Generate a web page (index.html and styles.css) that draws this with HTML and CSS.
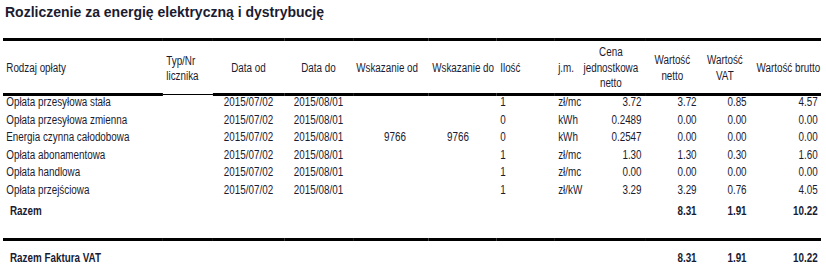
FILE: index.html
```html
<!DOCTYPE html>
<html lang="pl">
<head>
    <meta charset="UTF-8">
    <title>Rozliczenie</title>
    <link rel="stylesheet" href="styles.css">
</head>
<body>
    <h1 class="title">Rozliczenie za energię elektryczną i dystrybucję</h1>
    <div class="sheet">
        <table class="bill">
            <colgroup>
                <col class="col-name">
                <col class="col-meter">
                <col class="col-date">
                <col class="col-date2">
                <col class="col-reading">
                <col class="col-reading2">
                <col class="col-qty">
                <col class="col-unit">
                <col class="col-price">
                <col class="col-net">
                <col class="col-vat">
                <col class="col-gross">
            </colgroup>
            <thead>
                <tr>
                    <th class="l">Rodzaj opłaty</th>
                    <th class="l typ">Typ/Nr<br>licznika</th>
                    <th>Data od</th>
                    <th>Data do</th>
                    <th class="l">Wskazanie od</th>
                    <th class="l">Wskazanie do</th>
                    <th class="l">Ilość</th>
                    <th class="l">j.m.</th>
                    <th class="tight">Cena<br>jednostkowa<br>netto</th>
                    <th>Wartość<br>netto</th>
                    <th>Wartość<br>VAT</th>
                    <th class="r">Wartość brutto</th>
                </tr>
            </thead>
            <tbody>
                <tr>
                    <td>Opłata przesyłowa stała</td><td></td>
                    <td class="c">2015/07/02</td><td class="c">2015/08/01</td>
                    <td></td><td></td><td>1</td><td>zł/mc</td>
                    <td class="r">3.72</td><td class="r">3.72</td><td class="r">0.85</td><td class="r">4.57</td>
                </tr>
                <tr>
                    <td>Opłata przesyłowa zmienna</td><td></td>
                    <td class="c">2015/07/02</td><td class="c">2015/08/01</td>
                    <td></td><td></td><td>0</td><td>kWh</td>
                    <td class="r">0.2489</td><td class="r">0.00</td><td class="r">0.00</td><td class="r">0.00</td>
                </tr>
                <tr>
                    <td>Energia czynna całodobowa</td><td></td>
                    <td class="c">2015/07/02</td><td class="c">2015/08/01</td>
                    <td class="c from">9766</td><td class="c to">9766</td><td>0</td><td>kWh</td>
                    <td class="r">0.2547</td><td class="r">0.00</td><td class="r">0.00</td><td class="r">0.00</td>
                </tr>
                <tr>
                    <td>Opłata abonamentowa</td><td></td>
                    <td class="c">2015/07/02</td><td class="c">2015/08/01</td>
                    <td></td><td></td><td>1</td><td>zł/mc</td>
                    <td class="r">1.30</td><td class="r">1.30</td><td class="r">0.30</td><td class="r">1.60</td>
                </tr>
                <tr>
                    <td>Opłata handlowa</td><td></td>
                    <td class="c">2015/07/02</td><td class="c">2015/08/01</td>
                    <td></td><td></td><td>1</td><td>zł/mc</td>
                    <td class="r">0.00</td><td class="r">0.00</td><td class="r">0.00</td><td class="r">0.00</td>
                </tr>
                <tr>
                    <td>Opłata przejściowa</td><td></td>
                    <td class="c">2015/07/02</td><td class="c">2015/08/01</td>
                    <td></td><td></td><td>1</td><td>zł/kW</td>
                    <td class="r">3.29</td><td class="r">3.29</td><td class="r">0.76</td><td class="r">4.05</td>
                </tr>
                <tr class="sum">
                    <td colspan="9" class="sum-label">Razem</td>
                    <td class="r">8.31</td><td class="r">1.91</td><td class="r">10.22</td>
                </tr>
                <tr class="sum total">
                    <td colspan="9" class="sum-label">Razem Faktura VAT</td>
                    <td class="r">8.31</td><td class="r">1.91</td><td class="r">10.22</td>
                </tr>
            </tbody>
        </table>
    </div>
</body>
</html>
```

FILE: styles.css
```css
html, body {
    overflow: hidden;
}

body {
    margin: 0;
    padding: 4px 3px 0 3px;
    background-color: #fff;
    color: #1b1b30;
    font-family: "Liberation Sans", Arial, sans-serif;
}

.title {
    margin: 0 0 0 2px;
    font-size: 14px;
    line-height: 16px;
    font-weight: bold;
}

.sheet {
    width: 818px;
    margin-top: 18px;
    overflow: hidden;
}

/* the original uses Arial Narrow; no narrow face here, so squeeze the table */
.bill {
    width: 997.5px;
    table-layout: fixed;
    border-collapse: collapse;
    border-top: 3px solid #000;
    font-size: 12px;
    transform: scaleX(0.82);
    transform-origin: 0 0;
}

.col-name    { width: 195.1px; }
.col-meter   { width: 61px; }
.col-date    { width: 86.6px; }
.col-date2   { width: 84.1px; }
.col-reading { width: 92.7px; }
.col-reading2{ width: 82.9px; }
.col-qty     { width: 70.7px; }
.col-unit    { width: 26.8px; }
.col-price   { width: 82.9px; }
.col-net     { width: 67.1px; }
.col-vat     { width: 61px; }
.col-gross   { width: 86.6px; }

.bill th {
    height: 49px;
    padding: 3px 4px 0 4px;
    font-weight: normal;
    line-height: 15.5px;
    text-align: center;
    vertical-align: middle;
    white-space: nowrap;
    border-bottom: 3px solid #000;
}

.bill th.typ {
    border-bottom-width: 1px;
}

.bill th.tight {
    padding-left: 0;
    padding-right: 0;
}

.bill th.r {
    padding-right: 1px;
}

.bill td {
    height: 12px;
    padding: 0 4px 5.5px 4px;
    line-height: 12px;
    vertical-align: top;
    white-space: nowrap;
}

.bill .l { text-align: left; }
.bill .c { text-align: center; }
.bill .r { text-align: right; }

.bill td.from { padding-left: 14px; }
.bill td.to { padding-right: 16px; }

.sum td {
    font-weight: bold;
    height: 29px;
    padding-top: 4px;
    padding-bottom: 4px;
}

.sum td.sum-label {
    padding-left: 8.5px;
}

.sum.total td {
    border-top: 3px solid #000;
    padding-top: 11px;
    height: 20px;
}
```
